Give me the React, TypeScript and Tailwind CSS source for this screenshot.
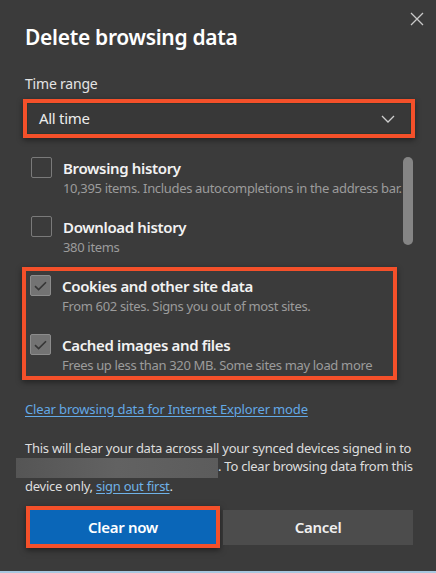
import React from "react";

interface DataItem {
  title: string;
  detail: string;
  checked: boolean;
}

const topItems: DataItem[] = [
  {
    title: "Browsing history",
    detail: "10,395 items. Includes autocompletions in the address bar.",
    checked: false,
  },
  { title: "Download history", detail: "380 items", checked: false },
];

const markedItems: DataItem[] = [
  {
    title: "Cookies and other site data",
    detail: "From 602 sites. Signs you out of most sites.",
    checked: true,
  },
  {
    title: "Cached images and files",
    detail: "Frees up less than 320 MB. Some sites may load more",
    checked: true,
  },
];

const font = { fontFamily: '"Noto Sans", "Open Sans", Arial, sans-serif' };

function CheckBox({ checked }: { checked: boolean }) {
  if (!checked) {
    return (
      <div className="w-[21px] h-[21px] shrink-0 rounded-[2px] border border-[#7a7a7a]" />
    );
  }
  return (
    <div className="w-[21px] h-[21px] shrink-0 rounded-[2px] border border-[#8c8c8c] bg-[#737373] flex items-center justify-center">
      <svg width="13" height="10" viewBox="0 0 13 10" fill="none">
        <path d="M1 5.2 L4.6 8.6 L12 1.2" stroke="#353535" strokeWidth="1.6" />
      </svg>
    </div>
  );
}

function ItemRow({ item }: { item: DataItem }) {
  return (
    <div className="flex items-start gap-[11px]">
      <CheckBox checked={item.checked} />
      <div className="flex flex-col pt-[1px] min-w-0">
        <div className="text-[15px] leading-[20px] font-semibold tracking-[-0.35px] text-[#f2f2f2] whitespace-nowrap">
          {item.title}
        </div>
        <div className="text-[13px] leading-[20px] tracking-[-0.33px] text-[#9c9c9c] whitespace-nowrap">
          {item.detail}
        </div>
      </div>
    </div>
  );
}

export default function App() {
  return (
    <div
      className="relative w-[436px] h-[573px] bg-[#3b3b3b] flex flex-col pl-[25px] pr-[23px] overflow-hidden"
      style={font}
    >
      {/* close button */}
      <button className="absolute top-[12px] right-[12px] w-[14px] h-[14px]">
        <svg width="14" height="14" viewBox="0 0 14 14">
          <path d="M1 1 L13 13 M13 1 L1 13" stroke="#c9c9c9" strokeWidth="1.3" />
        </svg>
      </button>

      <h1 className="pt-[23px] text-[21px] leading-[28px] font-semibold tracking-[-0.3px] text-white">
        Delete browsing data
      </h1>

      <div className="mt-[23px] text-[14px] leading-[20px] tracking-[-0.2px] text-[#e4e4e4]">
        Time range
      </div>

      {/* time range select */}
      <div className="mt-[5px] -mx-[2px] border-4 border-[#f4502a] shadow-[0_2px_6px_rgba(0,0,0,0.45)]">
        <div className="h-[31px] bg-[#383838] border border-[#2e362f] flex items-center justify-between pl-[11px] pr-[15px]">
          <span className="text-[15px] tracking-[-0.3px] text-[#ececec]">All time</span>
          <svg width="14" height="8" viewBox="0 0 14 8" fill="none">
            <path d="M1 1 L7 7 L13 1" stroke="#cfcfcf" strokeWidth="1.3" />
          </svg>
        </div>
      </div>

      {/* data types list */}
      <div className="mt-[19px] flex gap-[6px]">
        <div className="flex-1 min-w-0 flex flex-col">
          <div className="flex flex-col gap-[18px] pl-[6px]">
            {topItems.map((item) => (
              <ItemRow key={item.title} item={item} />
            ))}
          </div>
          <div className="mt-[10px] -ml-[3px] border-4 border-[#f4502a] pl-[4px] pt-[4px] pb-[1px] flex flex-col gap-[18px] shadow-[0_2px_6px_rgba(0,0,0,0.45)] overflow-hidden">
            {markedItems.map((item) => (
              <ItemRow key={item.title} item={item} />
            ))}
          </div>
        </div>
        <div className="w-[10px] h-[88px] shrink-0 rounded-full bg-[#858585]" />
      </div>

      <a className="mt-[20px] text-[13px] leading-[18px] tracking-[-0.15px] text-[#63a9e6] underline underline-offset-2 self-start">
        Clear browsing data for Internet Explorer mode
      </a>

      <p className="mt-[22px] text-[13px] leading-[17.5px] tracking-[-0.25px] text-[#dedede] whitespace-nowrap">
        This will clear your data across all your synced devices signed in to
        <br />
        <span className="inline-block align-middle -ml-[9px] w-[202px] h-[20px] bg-gradient-to-r from-[#555555] via-[#626262] to-[#5c5c5c]" />
        . To clear browsing data from this
        <br />
        device only,{" "}
        <a className="text-[#6fb2e8] underline underline-offset-2">sign out first</a>.
      </p>

      <div className="mt-[11px] flex items-center">
        <div className="w-[194px] ml-[1px] border-4 border-[#f4502a] shadow-[0_2px_6px_rgba(0,0,0,0.5)]">
          <button className="w-full h-[34px] bg-[#0a66b8] text-white text-[15px] font-semibold tracking-[-0.3px]">
            Clear now
          </button>
        </div>
        <button className="flex-1 ml-[3px] h-[35px] bg-[#4c4c4c] text-[#f0f0f0] text-[15px] font-semibold tracking-[-0.3px]">
          Cancel
        </button>
      </div>

      <div className="absolute left-0 right-0 bottom-0 h-[2px] bg-[#a9c8e0]" />
    </div>
  );
}
